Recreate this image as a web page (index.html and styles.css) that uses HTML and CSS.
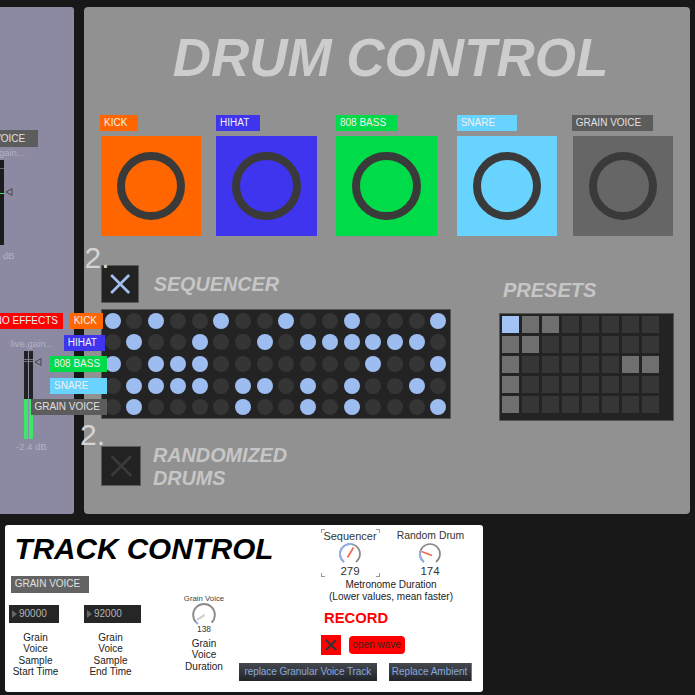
FILE: index.html
```html
<!DOCTYPE html>
<html lang="en">
<head>
<meta charset="utf-8">
<title>Drum Control</title>
<link rel="stylesheet" href="styles.css">
</head>
<body>
<main class="canvas">
  <section class="mixer-panel">
    <div class="tag tag-grey mix-voice">GRAIN VOICE</div>
    <div class="tiny-label mix-gain-top">live.gain...</div>
    <div class="meter-stub"><i></i><em></em></div>
    <svg class="tri tri-top" viewBox="0 0 8 8"><path d="M7 .7 1 4l6 3.300z"/></svg>
    <div class="tiny-label mix-db-top">dB</div>

    <div class="tag tag-red mix-noeffects">NO EFFECTS</div>
    <div class="tiny-label mix-gain">live.gain...</div>
    <div class="meter">
      <div class="meter-bar"><b></b><u></u></div>
      <div class="meter-bar"><b></b><u></u></div>
    </div>
    <svg class="tri tri-low" viewBox="0 0 8 8"><path d="M7 .7 1 4l6 3.300z"/></svg>
    <div class="tiny-label mix-db">-2.4 dB</div>
  </section>

  <section class="drum-panel">
    <h1 class="drum-title">DRUM CONTROL</h1>

    <div class="tag tag-orange pad-tag p1" >KICK</div>
    <div class="tag tag-blue pad-tag p2">HIHAT</div>
    <div class="tag tag-green pad-tag p3">808 BASS</div>
    <div class="tag tag-cyan pad-tag p4">SNARE</div>
    <div class="tag tag-grey pad-tag p5">GRAIN VOICE</div>

    <div class="pad pad1 orange"><span></span></div>
    <div class="pad pad2 blue"><span></span></div>
    <div class="pad pad3 green"><span></span></div>
    <div class="pad pad4 cyan"><span></span></div>
    <div class="pad pad5 grey"><span></span></div>

    <div class="toggle toggle-seq">
      <svg viewBox="0 0 38 38"><path d="M9.500 9.500 28.500 28.500M28.500 9.500 9.500 28.500"/></svg>
    </div>
    <div class="two two-a">2.</div>
    <div class="heading head-seq">SEQUENCER</div>

    <div class="sequencer" id="seq"></div>

    <div class="toggle toggle-rand">
      <svg viewBox="0 0 41 41"><path d="M10 10 31 31M31 10 10 31"/></svg>
    </div>
    <div class="two two-b">2.</div>
    <div class="heading head-rand">RANDOMIZED<br>DRUMS</div>

    <div class="heading head-presets">PRESETS</div>
    <div class="presets" id="presets"></div>
  </section>

  <div class="tag tag-orange s1">KICK</div>
  <div class="tag tag-blue s2">HIHAT</div>
  <div class="tag tag-green s3">808 BASS</div>
  <div class="tag tag-cyan s4">SNARE</div>
  <div class="tag tag-grey s5">GRAIN VOICE</div>

  <section class="track-panel">
    <h2 class="track-title">TRACK CONTROL</h2>
    <div class="tag tag-grey track-voice">GRAIN VOICE</div>

    <div class="numbox nb1">90000</div>
    <div class="numbox nb2">92000</div>
    <div class="caption c1">Grain<br>Voice<br>Sample<br>Start Time</div>
    <div class="caption c2">Grain<br>Voice<br>Sample<br>End Time</div>

    <div class="dial-label small-top">Grain Voice</div>
    <svg class="dial dial-grain" viewBox="0 0 24 24">
      <path class="arc-g" d="M5 19A10 10 0 1 1 19 19"/>
      <path class="needle-g" d="M5.500 16.500 12.500 12"/>
      <path class="arc-b" d="M4.600 18.500 6.500 20.300"/>
    </svg>
    <div class="dial-value small-val">138</div>
    <div class="caption c3">Grain<br>Voice<br>Duration</div>

    <div class="corner-box"></div>
    <div class="dial-label seq-label">Sequencer</div>
    <svg class="dial dial-seq" viewBox="0 0 24 24">
      <path class="arc-g" d="M6 20A10 10 0 1 1 18 20"/>
      <path class="arc-b" d="M6 20A10 10 0 0 1 14.800 2.400"/>
      <path class="needle-r" d="M9.500 15.500 15.500 5.500"/>
    </svg>
    <div class="dial-value seq-val">279</div>

    <div class="dial-label rand-label">Random Drum</div>
    <svg class="dial dial-rand" viewBox="0 0 24 24">
      <path class="arc-g" d="M6 20A10 10 0 1 1 18 20"/>
      <path class="arc-b" d="M6 20A10 10 0 0 1 2.300 9"/>
      <path class="needle-r" d="M14 13.500 3.500 9.500"/>
    </svg>
    <div class="dial-value rand-val">174</div>

    <div class="metro">Metronome Duration<br>(Lower values, mean faster)</div>
    <div class="record">RECORD</div>
    <div class="rec-toggle">
      <svg viewBox="0 0 20 20"><path d="M5 5 15 15M15 5 5 15"/></svg>
    </div>
    <div class="open-wave">open wave</div>
    <div class="act-btn act1">replace Granular Voice Track</div>
    <div class="act-btn act2">Replace Ambient</div>
  </section>
</main>
<script src="app.js"></script>
</body>
</html>
```

FILE: styles.css
```css
* { box-sizing: border-box; }
html, body { margin: 0; padding: 0; }
body { width: 695px; height: 695px; overflow: hidden; background: #181818; font-family: "Liberation Sans", Arial, sans-serif; }
.canvas { position: relative; width: 695px; height: 695px; overflow: hidden; }

.mixer-panel { position: absolute; left: 0; top: 7px; width: 73.500px; height: 507px; background: #8c89a3; border-radius: 0 3px 3px 0; }
.drum-panel { position: absolute; left: 84px; top: 7px; width: 606px; height: 507px; background: #919191; border-radius: 4px; }
.track-panel { position: absolute; left: 5px; top: 525px; width: 477.500px; height: 167px; background: #fff; border-radius: 3px; color: #222; }

.tag { position: absolute; height: 16px; line-height: 16.500px; font-size: 10px; padding-left: 3.700px; color: #f0f0f0; white-space: nowrap; }
.tag-orange { background: #ff6600; }
.tag-blue { background: #3f35ee; }
.tag-green { background: #00db4a; }
.tag-cyan { background: #69d3ff; }
.tag-grey { background: #5c5c5c; color: #e0e0e0; }
.tag-red { background: #ff0000; }

.mix-voice { left: -44px; top: 123px; width: 82px; height: 17px; line-height: 17px; }
.mix-noeffects { left: -9px; top: 306px; width: 72px; }
.tiny-label { position: absolute; font-size: 9.500px; line-height: 10px; color: #b4b2c2; white-space: nowrap; }
.mix-gain-top { left: -18px; top: 141px; }
.mix-db-top { left: 2.700px; top: 244px; }
.mix-gain { left: 10.600px; top: 332px; }
.mix-db { left: 16px; top: 435px; }
.meter-stub { position: absolute; left: 0; top: 153px; width: 4px; height: 85px; background: #1c1c1c; }
.meter-stub i { position: absolute; left: 0; right: 0; top: 8px; height: 1px; background: #666; }
.meter-stub em { position: absolute; left: 0; right: 0; top: 33px; height: 1px; background: #3ce66a; }
.tri { position: absolute; width: 8px; height: 8px; fill: none; stroke: #444; stroke-width: 1; }
.tri-top { left: 4.500px; top: 180.700px; }
.tri-low { left: 33.500px; top: 350.700px; }
.meter { position: absolute; left: 24px; top: 344px; display: flex; gap: .6px; }
.meter-bar { position: relative; width: 4.300px; height: 88px; background: #222; }
.meter-bar b { position: absolute; left: 0; right: 0; bottom: 0; height: 40px; background: #3ce66a; }
.meter-bar u { position: absolute; left: 0; right: 0; top: 7.500px; height: 3.500px; border-top: 1px solid #777; border-bottom: 1px solid #777; }

.drum-title { position: absolute; left: 0; top: 20px; width: 611px; margin: 0; padding-left: 2px; text-align: center; font-size: 53px; line-height: 62px; font-weight: 700; font-style: italic; color: #cdcdcd; white-space: nowrap; }

.pad-tag { top: 108px; }
.p1 { left: 16.300px; width: 37.500px; }
.p2 { left: 132.300px; width: 43.700px; }
.p3 { left: 252.300px; width: 60.700px; }
.p4 { left: 373px; width: 60px; }
.p5 { left: 488px; width: 81px; }

.pad { position: absolute; top: 129px; width: 100.400px; height: 100px; display: flex; align-items: center; justify-content: center; }
.pad span { width: 68.500px; height: 68.500px; border-radius: 50%; border: 8.300px solid #3a3a3a; }
.pad1 { left: 16.600px; }
.pad2 { left: 132.400px; }
.pad3 { left: 252.400px; }
.pad4 { left: 373px; }
.pad5 { left: 488.700px; }
.orange { background: #ff6600; }
.blue { background: #3f35ee; }
.green { background: #00db4a; }
.cyan { background: #69d3ff; }
.grey { background: #666666; }

.two { position: absolute; font-size: 30px; line-height: 30px; color: #d4d4d4; }
.two-a { left: .5px; top: 236px; }
.two-b { left: -4px; top: 413px; }

.toggle { position: absolute; background: #222; border: 1px solid #5a5a5a; }
.toggle svg { display: block; width: 100%; height: 100%; fill: none; }
.toggle svg path { stroke: inherit; }
.toggle-seq { left: 16.700px; top: 258.300px; width: 38.300px; height: 38px; stroke: #a3c0f0; stroke-width: 2.800; }
.toggle-rand { left: 16.700px; top: 439px; width: 40.600px; height: 40px; stroke: #3a3a3a; stroke-width: 3; }

.heading { position: absolute; font-weight: 700; font-style: italic; color: #c6c6c6; font-size: 20px; line-height: 23px; white-space: nowrap; }
.head-seq { left: 69.700px; top: 265.500px; font-size: 19.800px; }
.head-rand { left: 69px; top: 436.500px; font-size: 19.800px; }
.head-presets { left: 419px; top: 272px; }

.sequencer { position: absolute; left: 16.700px; top: 302px; width: 350px; height: 110.300px; background: #232323; border: 1px solid #555; display: grid; grid-template-columns: repeat(16, 16px); grid-auto-rows: 16px; column-gap: 5.720px; row-gap: 5.670px; padding: 2.700px 0 0 3px; }
.sequencer i { border-radius: 50%; background: #353535; }
.sequencer i.on { background: #9dbcf0; }

.presets { position: absolute; left: 415px; top: 306px; width: 174.500px; height: 108px; background: #232323; border: 1px solid #555; display: grid; grid-template-columns: repeat(8, 17px); grid-auto-rows: 17px; gap: 3px; padding: 2px 0 0 2.300px; }
.presets i { background: #363636; }
.presets i.used { background: #6f6f6f; }
.presets i.sel { background: #a3c3f5; }

.track-title { position: absolute; left: 9.500px; top: 6px; margin: 0; font-size: 29.700px; line-height: 36px; font-weight: 700; font-style: italic; color: #000; white-space: nowrap; }
.track-voice { left: 6px; top: 51px; width: 77.500px; height: 16.700px; line-height: 16.700px; background: #636363; }

.numbox { position: absolute; top: 80px; height: 17.700px; background: #262626; color: #b4b4b4; font-size: 10px; line-height: 17.700px; padding-left: 10px; }
.numbox::before { content: ""; position: absolute; left: 3px; top: 5px; border-left: 5px solid #666; border-top: 4px solid transparent; border-bottom: 4px solid transparent; }
.nb1 { left: 4px; width: 49.700px; }
.nb2 { left: 79px; width: 57.300px; }

.caption { position: absolute; text-align: center; font-size: 10px; line-height: 11.400px; color: #222; white-space: nowrap; }
.c1 { left: 3px; width: 55px; top: 107px; }
.c2 { left: 78px; width: 55px; top: 107px; }
.c3 { left: 171.500px; width: 55px; top: 113px; }

.dial { position: absolute; display: block; fill: none; }
.dial-label { position: absolute; text-align: center; font-size: 10.400px; line-height: 12px; color: #333; white-space: nowrap; }
.dial-value { position: absolute; text-align: center; color: #333; font-size: 11.500px; line-height: 12px; }
.arc-g { stroke: #8a8a8a; stroke-width: 1.700; }
.arc-b { stroke: #8fb0ea; stroke-width: 1.900; }
.needle-r { stroke: #f2694f; stroke-width: 1.700; }
.needle-g { stroke: #cfcfcf; stroke-width: 2; }
.small-top { left: 171.500px; width: 55px; top: 68px; font-size: 7.800px; color: #444; }
.dial-grain { left: 186px; top: 77px; width: 26px; height: 26px; }
.small-val { left: 184px; width: 30px; top: 99px; font-size: 8.400px; line-height: 10px; }

.corner-box { position: absolute; left: 316px; top: 4px; width: 59px; height: 48px; background:
  linear-gradient(#999,#999) 0 0/4px 1px no-repeat, linear-gradient(#999,#999) 0 0/1px 4px no-repeat,
  linear-gradient(#999,#999) 100% 0/4px 1px no-repeat, linear-gradient(#999,#999) 100% 0/1px 4px no-repeat,
  linear-gradient(#999,#999) 0 100%/4px 1px no-repeat, linear-gradient(#999,#999) 0 100%/1px 4px no-repeat,
  linear-gradient(#999,#999) 100% 100%/4px 1px no-repeat, linear-gradient(#999,#999) 100% 100%/1px 4px no-repeat; }
.seq-label { left: 315px; width: 60px; top: 5px; font-size: 11px; }
.dial-seq { left: 333px; top: 17px; width: 24px; height: 24px; }
.seq-val { left: 325px; width: 40px; top: 40px; }
.rand-label { left: 385.500px; width: 80px; top: 5px; }
.dial-rand { left: 413px; top: 17px; width: 24px; height: 24px; }
.rand-val { left: 405px; width: 40px; top: 40px; }
.metro { position: absolute; left: 276px; width: 220px; top: 54px; text-align: center; font-size: 10px; line-height: 11.500px; color: #222; white-space: nowrap; }

.record { position: absolute; left: 319px; top: 84px; font-size: 14.800px; line-height: 18px; font-weight: 700; color: #ff0000; }
.rec-toggle { position: absolute; left: 316px; top: 110px; width: 20px; height: 20px; background: #ff0000; }
.rec-toggle svg { display: block; width: 100%; height: 100%; fill: none; stroke: #333; stroke-width: 2; }
.open-wave { position: absolute; left: 344px; top: 110.500px; width: 55.500px; height: 18px; background: #ff0000; border-radius: 4px; color: #3a2020; font-size: 10px; line-height: 18px; text-align: center; }

.act-btn { position: absolute; top: 138px; height: 18px; line-height: 17px; font-size: 10px; text-align: center; color: #88a8dd; background: linear-gradient(#45494f, #212428); white-space: nowrap; }
.act1 { left: 234px; width: 137.700px; letter-spacing: -.08px; }
.act2 { left: 383.500px; width: 83.200px; border-right: 1px solid #777; }

.s1 { left: 70px; top: 313px; width: 33.300px; }
.s2 { left: 64px; top: 334.700px; width: 40.700px; }
.s3 { left: 50.300px; top: 356px; width: 56.400px; }
.s4 { left: 50.300px; top: 378px; width: 56.400px; }
.s5 { left: 30.700px; top: 398.700px; width: 76.600px; height: 16.300px; }
```

FILE: app.js
```js
var rows = [
  "1010010010010001",
  "0100100101111110",
  "1011100000001001",
  "0111101101010010",
  "0100001001010001"
];
var seq = document.getElementById("seq");
rows.join("").split("").forEach(function (c) {
  var d = document.createElement("i");
  if (c === "1") d.className = "on";
  seq.appendChild(d);
});
var presetRows = [
  "s1100000",
  "11000000",
  "10000011",
  "10000000",
  "10000000"
];
var p = document.getElementById("presets");
presetRows.join("").split("").forEach(function (c) {
  var d = document.createElement("i");
  if (c === "1") d.className = "used";
  if (c === "s") d.className = "sel";
  p.appendChild(d);
});
```
